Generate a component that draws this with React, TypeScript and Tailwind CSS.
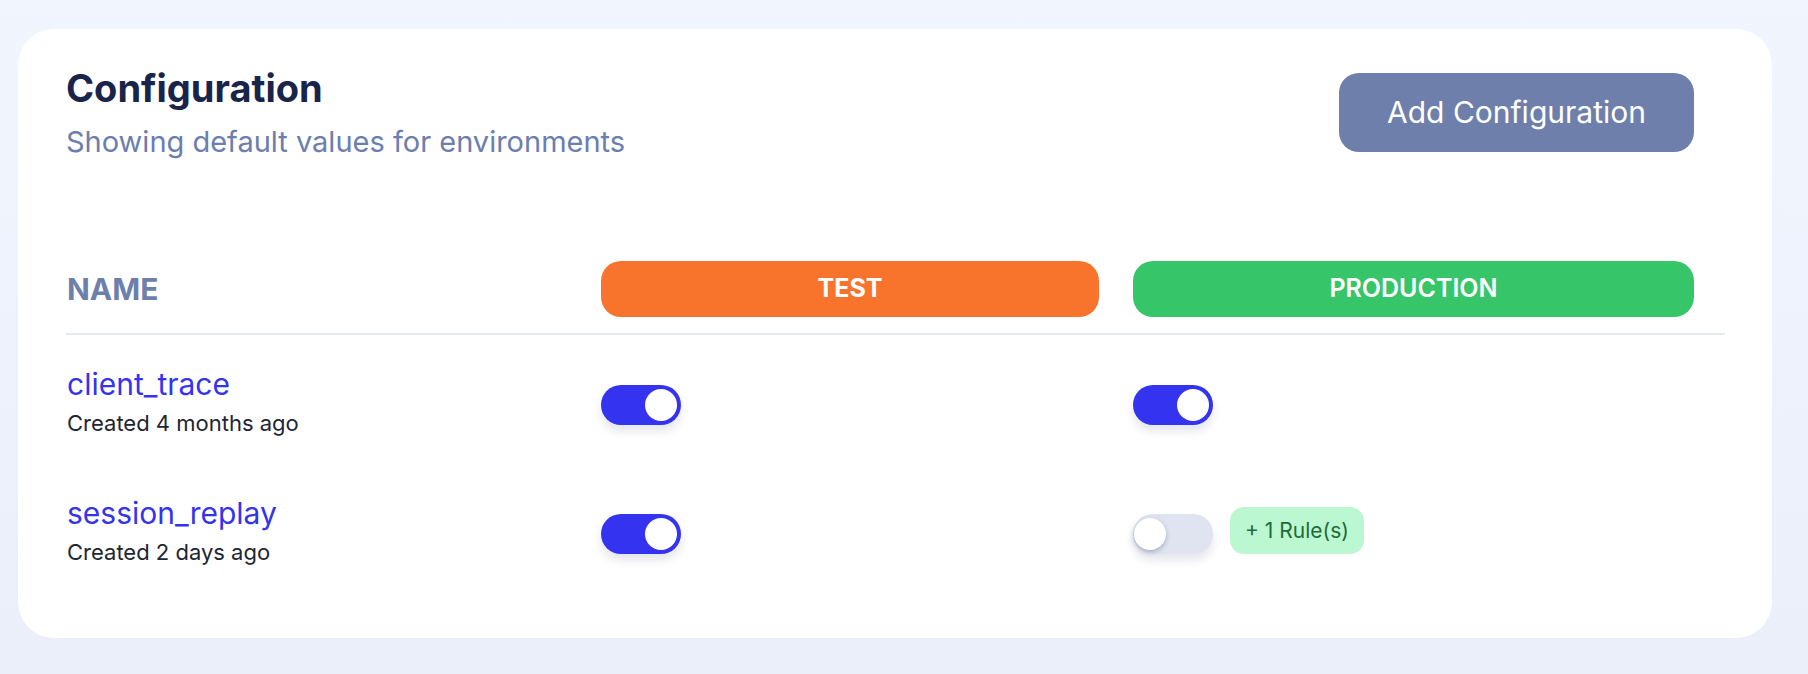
import React from "react";

type Row = { name: string; created: string; test: boolean; prod: boolean; rules?: number };

const rows: Row[] = [
  { name: "client_trace", created: "Created 4 months ago", test: true, prod: true },
  { name: "session_replay", created: "Created 2 days ago", test: true, prod: false, rules: 1 },
];

function Toggle({ on }: { on: boolean }) {
  return (
    <div
      className={`flex items-center w-[80px] h-[40px] rounded-full p-[4px] shadow-[0_6px_10px_rgba(30,41,90,0.12)] ${
        on ? "bg-[#3333f0] justify-end" : "bg-[#dfe4f0] justify-start"
      }`}
    >
      <div
        className={`w-[32px] h-[32px] rounded-full bg-white ${
          on ? "" : "-ml-[3px] shadow-[0_2px_5px_rgba(60,70,110,0.35)]"
        }`}
      />
    </div>
  );
}

export default function App() {
  return (
    <div className="h-screen flex flex-col bg-gradient-to-b from-[#f1f5fe] to-[#ebeffa] pl-[18px] pr-[36px] pt-[29px] pb-[36px] font-['Inter',sans-serif]">
      <div className="flex-1 bg-white rounded-[36px] pl-[48px] pr-[47px] pt-[36px] pb-[48px]">
        <div className="flex items-start justify-between">
          <div>
            <h1 className="text-[38px] leading-[46px] font-bold text-[#19244a]">Configuration</h1>
            <p className="mt-[14px] text-[29px] leading-[34px] text-[#6b7eae]">
              Showing default values for environments
            </p>
          </div>
          <button className="mt-[8px] mr-[31px] w-[355px] h-[79px] rounded-[20px] bg-[#6e7fab] text-white text-[30px]">
            Add Configuration
          </button>
        </div>

        <div className="mt-[102px]">
          <div className="grid grid-cols-[535px_532px_1fr] items-center pb-[16px] border-b-2 border-[#e6eaf0]">
            <div className="text-[30px] font-bold text-[#6e7fab] pl-[1px]">NAME</div>
            <div className="w-[498px] h-[56px] rounded-[20px] bg-[#f8742d] flex items-center justify-center text-white text-[25px] font-bold">
              TEST
            </div>
            <div className="w-[561px] h-[56px] rounded-[20px] bg-[#37c56a] flex items-center justify-center text-white text-[25px] font-semibold">
              PRODUCTION
            </div>
          </div>

          <div className="flex flex-col gap-[59px] pt-[32px]">
            {rows.map((r) => (
              <div key={r.name} className="grid grid-cols-[535px_532px_1fr] items-center">
                <div className="pl-[1px]">
                  <div className="text-[30px] leading-[34px] text-[#3434ee]">{r.name}</div>
                  <div className="mt-[8px] text-[22px] leading-[28px] text-[#1e2533]">{r.created}</div>
                </div>
                <div className="mt-[6px]">
                  <Toggle on={r.test} />
                </div>
                <div className="mt-[6px] flex items-center gap-[17px]">
                  <Toggle on={r.prod} />
                  {r.rules ? (
                    <span className="-mt-[7px] h-[47px] px-[15px] flex items-center rounded-[14px] bg-[#bbf7d0] text-[#1f6b3a] text-[21px]">
                      + {r.rules} Rule(s)
                    </span>
                  ) : null}
                </div>
              </div>
            ))}
          </div>
        </div>
      </div>
    </div>
  );
}
